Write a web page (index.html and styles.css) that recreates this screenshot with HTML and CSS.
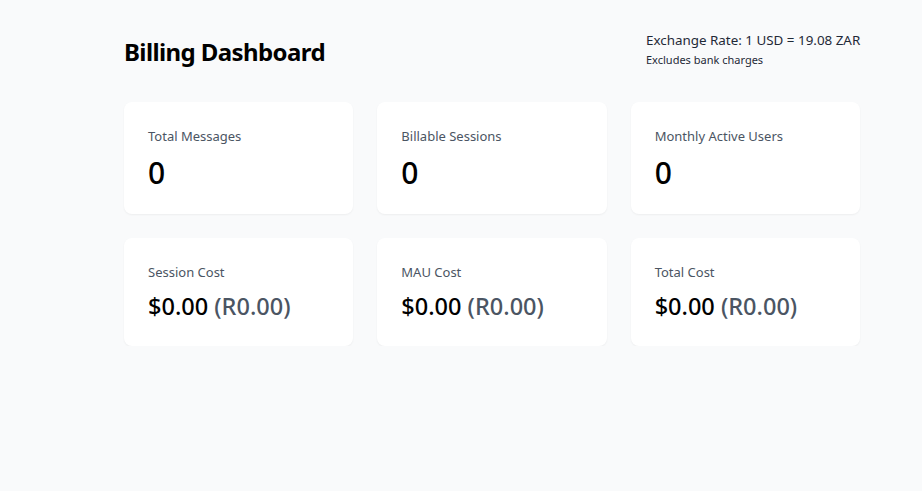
FILE: index.html
```html
<!DOCTYPE html>
<html lang="en">
<head>
<meta charset="utf-8">
<title>Billing Dashboard</title>
<link rel="stylesheet" href="styles.css">
</head>
<body>
<div class="page">
  <header class="header">
    <h1 class="title">Billing Dashboard</h1>
    <div class="rate">
      <div class="rate-main">Exchange Rate: 1 USD = 19.08 ZAR</div>
      <div class="rate-note">Excludes bank charges</div>
    </div>
  </header>
  <section class="grid">
    <div class="card">
      <div class="label">Total Messages</div>
      <div class="count">0</div>
    </div>
    <div class="card">
      <div class="label">Billable Sessions</div>
      <div class="count">0</div>
    </div>
    <div class="card">
      <div class="label">Monthly Active Users</div>
      <div class="count">0</div>
    </div>
    <div class="card">
      <div class="label">Session Cost</div>
      <div class="cost">$0.00 <span class="zar">(R0.00)</span></div>
    </div>
    <div class="card">
      <div class="label">MAU Cost</div>
      <div class="cost">$0.00 <span class="zar">(R0.00)</span></div>
    </div>
    <div class="card">
      <div class="label">Total Cost</div>
      <div class="cost">$0.00 <span class="zar">(R0.00)</span></div>
    </div>
  </section>
</div>
</body>
</html>
```

FILE: styles.css
```css
* { box-sizing: border-box; }
html, body {
  margin: 0;
  padding: 0;
  background: #f9fafb;
  font-family: "Noto Sans", "Open Sans", sans-serif;
  color: #111827;
}
.page {
  width: 736px;
  margin-left: 124px;
  padding-top: 28px;
}
.header {
  display: flex;
  justify-content: space-between;
  align-items: flex-start;
  margin-bottom: 32px;
}
.title {
  margin: 6px 0 0;
  font-size: 24px;
  line-height: 36px;
  font-weight: 700;
  letter-spacing: -0.6px;
  color: #000;
}
.rate {
  width: 214px;
  padding-top: 2px;
  white-space: nowrap;
}
.rate-main {
  font-size: 13.4px;
  line-height: 20px;
  color: #1f2937;
}
.rate-note {
  font-size: 11px;
  line-height: 20px;
  color: #1f2937;
}
.grid {
  display: grid;
  grid-template-columns: repeat(3, 1fr);
  gap: 24px;
}
.card {
  background: #fff;
  border-radius: 8px;
  padding: 24px;
  box-shadow: 0 1px 2px rgba(0,0,0,0.05);
}
.label {
  font-size: 13px;
  line-height: 20px;
  color: #4b5563;
}
.count {
  margin-top: 8px;
  padding-top: 1px;
  font-size: 30px;
  line-height: 35px;
  font-weight: 500;
  color: #000;
}
.cost {
  margin-top: 8px;
  font-size: 23.5px;
  line-height: 32px;
  font-weight: 500;
  color: #000;
}
.zar {
  color: #4b5563;
}
```
